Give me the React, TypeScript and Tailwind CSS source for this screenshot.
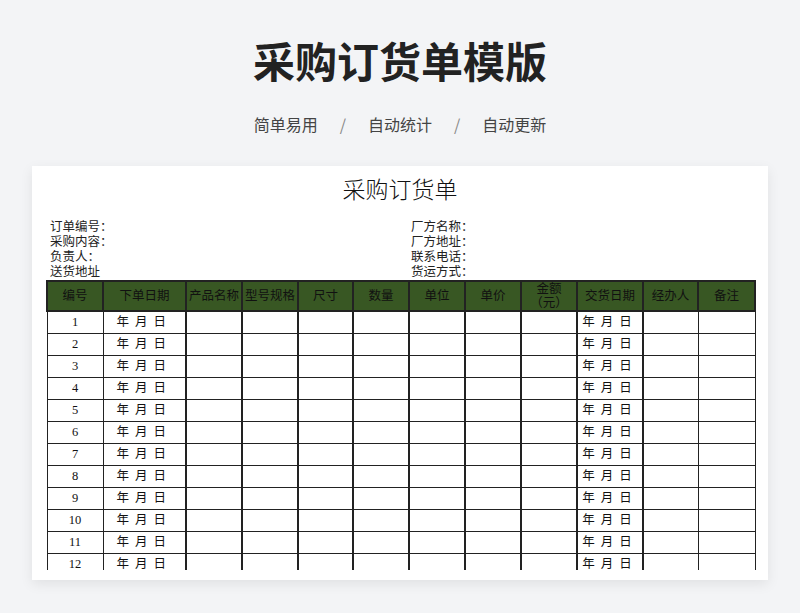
const cols = [
  { t: "编号", w: 56 },
  { t: "下单日期", w: 83 },
  { t: "产品名称", w: 56 },
  { t: "型号规格", w: 56 },
  { t: "尺寸", w: 55 },
  { t: "数量", w: 56 },
  { t: "单位", w: 56 },
  { t: "单价", w: 56 },
  { t: "金额（元）", w: 56 },
  { t: "交货日期", w: 66 },
  { t: "经办人", w: 55 },
  { t: "备注", w: 57 },
]

const serif = { fontFamily: '"Liberation Serif", "Noto Sans CJK SC", serif' }

export default function App() {
  const rows = Array.from({ length: 12 }, (_, i) => i + 1)
  return (
    <div className="h-[613px] w-[800px] overflow-hidden bg-[#f3f4f6]">
      <h1 className="pt-[34px] text-center text-[42px] font-bold leading-[52px] text-[#222]" style={{ fontFamily: '"Noto Sans CJK SC", sans-serif' }}>
        采购订货单模版
      </h1>
      <div className="mt-[26px] flex justify-center gap-[22px] text-[16px] leading-[24px] text-[#444]" style={{ fontFamily: '"Noto Sans CJK SC", sans-serif' }}>
        <span>简单易用</span><span className="text-[#888]">/</span>
        <span>自动统计</span><span className="text-[#888]">/</span>
        <span>自动更新</span>
      </div>
      <div className="mx-[32px] mt-[30px] h-[414px] bg-white shadow-[0_4px_12px_rgba(0,0,0,0.08)]" style={serif}>
        <div className="pt-[10px] text-center text-[23px] font-light leading-[30px] text-[#111]">采购订货单</div>
        <div className="mt-[14px] flex text-[12.5px] leading-[15px] text-[#222]">
          <div className="ml-[18px] w-[361px]">
            <div>订单编号：</div><div>采购内容：</div><div>负责人：</div><div>送货地址</div>
          </div>
          <div>
            <div>厂方名称：</div><div>厂方地址：</div><div>联系电话：</div><div>货运方式：</div>
          </div>
        </div>
        <div className="ml-[14px] h-[290px] overflow-hidden">
          <table className="border-collapse text-[12.5px] text-[#111]">
            <thead>
              <tr className="h-[30px] bg-[#385723]">
                {cols.map((c) => (
                  <th key={c.t} style={{ width: c.w }} className="border-2 border-[#222] p-0 text-center font-normal leading-[14px] text-[#111]">
                    {c.t === "金额（元）" ? (<>金额<br />（元）</>) : c.t}
                  </th>
                ))}
              </tr>
            </thead>
            <tbody>
              {rows.map((r) => (
                <tr key={r} className="h-[22px]">
                  {cols.map((c, ci) => (
                    <td key={ci} className={`border border-[#222] p-0 text-center text-[#111] ${ci >= 2 && ci <= 9 ? "border-x-2" : ""}`}>
                      {ci === 0 ? r : ci === 1 || ci === 9 ? <span className="tracking-[6px]">年月日</span> : ""}
                    </td>
                  ))}
                </tr>
              ))}
            </tbody>
          </table>
        </div>
      </div>
    </div>
  )
}
